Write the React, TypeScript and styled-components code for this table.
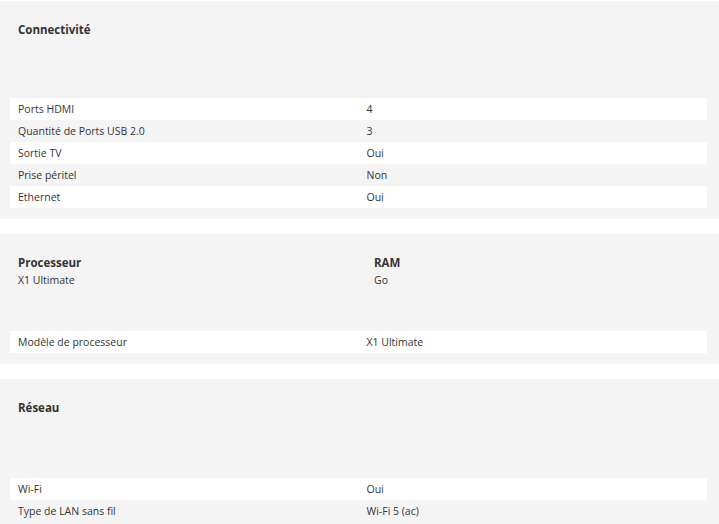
import React from 'react';
import styled, { createGlobalStyle } from 'styled-components';

interface Spec {
  label: string;
  value: string;
}

interface HeaderItem {
  title: string;
  value?: string;
}

interface SectionData {
  headers: HeaderItem[];
  rows: Spec[];
}

const GlobalStyle = createGlobalStyle`
  html, body {
    margin: 0;
    padding: 0;
    background: #ffffff;
  }
  body {
    font-family: "Open Sans", "Noto Sans", sans-serif;
    color: #333333;
  }
`;

const Page = styled.div`
  display: flex;
  flex-direction: column;
  gap: 15px;
  padding-top: 1px;
`;

const Section = styled.section`
  background: #f4f4f4;
  padding: 0 12px 11px 10px;
`;

const HeaderGrid = styled.div<{ $tall?: boolean }>`
  display: grid;
  grid-template-columns: 356px 1fr;
  height: ${props => (props.$tall ? '99px' : '97px')};
  padding: 20px 8px 0;
  box-sizing: border-box;
  align-content: start;
`;

const HeaderCell = styled.div`
  display: flex;
  flex-direction: column;
`;

const HeaderTitle = styled.h3`
  margin: 0;
  font-size: 11.5px;
  line-height: 17px;
  font-weight: 700;
  color: #333333;
`;

const HeaderValue = styled.div`
  font-size: 10.5px;
  line-height: 18px;
  color: #333333;
`;

const Table = styled.div`
  display: flex;
  flex-direction: column;
`;

const Row = styled.div<{ $striped: boolean }>`
  display: grid;
  grid-template-columns: 1fr 1fr;
  height: 22px;
  align-items: center;
  background: ${props => (props.$striped ? 'transparent' : '#ffffff')};
`;

const Cell = styled.div`
  padding: 0 8px;
  font-size: 10.5px;
  color: #333333;
  white-space: nowrap;
`;

const sections: SectionData[] = [
  {
    headers: [{ title: 'Connectivité' }],
    rows: [
      { label: 'Ports HDMI', value: '4' },
      { label: 'Quantité de Ports USB 2.0', value: '3' },
      { label: 'Sortie TV', value: 'Oui' },
      { label: 'Prise péritel', value: 'Non' },
      { label: 'Ethernet', value: 'Oui' },
    ],
  },
  {
    headers: [
      { title: 'Processeur', value: 'X1 Ultimate' },
      { title: 'RAM', value: 'Go' },
    ],
    rows: [{ label: 'Modèle de processeur', value: 'X1 Ultimate' }],
  },
  {
    headers: [{ title: 'Réseau' }],
    rows: [
      { label: 'Wi-Fi', value: 'Oui' },
      { label: 'Type de LAN sans fil', value: 'Wi-Fi 5 (ac)' },
    ],
  },
];

const App: React.FC = () => {
  return (
    <>
      <GlobalStyle />
      <Page>
        {sections.map((section, i) => (
          <Section key={i}>
            <HeaderGrid $tall={i === sections.length - 1}>
              {section.headers.map(h => (
                <HeaderCell key={h.title}>
                  <HeaderTitle>{h.title}</HeaderTitle>
                  {h.value && <HeaderValue>{h.value}</HeaderValue>}
                </HeaderCell>
              ))}
            </HeaderGrid>
            <Table>
              {section.rows.map((row, j) => (
                <Row key={row.label} $striped={j % 2 === 1}>
                  <Cell>{row.label}</Cell>
                  <Cell>{row.value}</Cell>
                </Row>
              ))}
            </Table>
          </Section>
        ))}
      </Page>
    </>
  );
};

export default App;
